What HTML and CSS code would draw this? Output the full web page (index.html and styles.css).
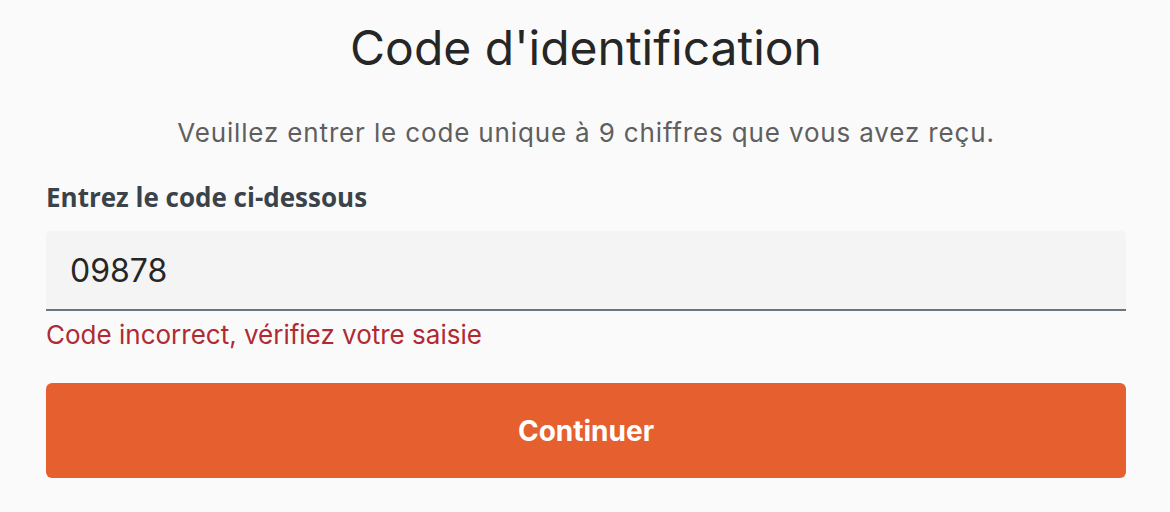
FILE: index.html
```html
<!DOCTYPE html>
<html lang="fr">
<head>
<meta charset="utf-8">
<title>Code d'identification</title>
<link rel="stylesheet" href="styles.css">
</head>
<body>
<main class="page">
  <h1 class="title">Code d'identification</h1>
  <p class="subtitle">Veuillez entrer le code unique à 9 chiffres que vous avez reçu.</p>
  <form class="form">
    <label class="label" for="code">Entrez le code ci-dessous</label>
    <input class="input" id="code" type="text" value="09878">
    <p class="error">Code incorrect, vérifiez votre saisie</p>
    <button class="button" type="button">Continuer</button>
  </form>
</main>
</body>
</html>
```
FILE: styles.css
```css
html, body {
  margin: 0;
  padding: 0;
  background: #fafafa;
}
.page {
  padding: 0 44px 0 46px;
  display: flex;
  flex-direction: column;
  font-family: Inter, "Liberation Sans", sans-serif;
}
.title {
  margin: 20px 0 0;
  font-size: 48px;
  line-height: 56px;
  font-weight: 400;
  color: #262626;
  text-align: center;
}
.subtitle {
  margin: 42px 0 0;
  font-size: 26px;
  line-height: 30px;
  letter-spacing: 0.85px;
  color: #5f5f5f;
  text-align: center;
}
.form {
  display: flex;
  flex-direction: column;
  margin-top: 34px;
}
.label {
  font-family: "Open Sans", "Noto Sans", sans-serif;
  font-weight: 700;
  font-size: 26px;
  line-height: 30px;
  color: #3a424a;
}
.input {
  margin-top: 19px;
  height: 80px;
  box-sizing: border-box;
  border: none;
  border-bottom: 2px solid #6b7480;
  border-radius: 5px 5px 0 0;
  background: #f4f4f4;
  padding: 0 24px;
  font-family: Inter, "Liberation Sans", sans-serif;
  font-size: 32px;
  color: #262626;
  outline: none;
}
.error {
  margin: 8px 0 0;
  font-size: 26px;
  line-height: 32px;
  color: #b02a33;
}
.button {
  margin-top: 32px;
  height: 95px;
  border: none;
  border-radius: 6px;
  background: #e65f2f;
  color: #ffffff;
  font-family: Inter, "Liberation Sans", sans-serif;
  font-weight: 700;
  font-size: 28px;
}
```
